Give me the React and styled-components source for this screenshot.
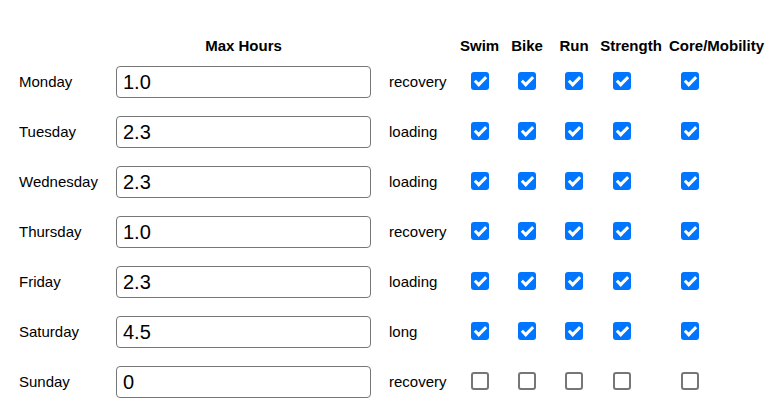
import styled, { createGlobalStyle } from "styled-components";

const GlobalStyle = createGlobalStyle`
  body {
    margin: 0;
    background: #ffffff;
    font-family: "Liberation Sans", Arial, sans-serif;
    color: #000000;
  }
`;

const days = [
  { day: "Monday", hours: "1.0", type: "recovery", on: true },
  { day: "Tuesday", hours: "2.3", type: "loading", on: true },
  { day: "Wednesday", hours: "2.3", type: "loading", on: true },
  { day: "Thursday", hours: "1.0", type: "recovery", on: true },
  { day: "Friday", hours: "2.3", type: "loading", on: true },
  { day: "Saturday", hours: "4.5", type: "long", on: true },
  { day: "Sunday", hours: "0", type: "recovery", on: false },
];

const sports = [
  { name: "Swim", offset: null },
  { name: "Bike", offset: null },
  { name: "Run", offset: null },
  { name: "Strength", offset: 20 },
  { name: "Core/Mobility", offset: 12 },
];

export default function App() {
  return (
    <Page>
      <GlobalStyle />
      <Planner>
        <HeaderRow>
          <span />
          <HeadCell>Max Hours</HeadCell>
          <span />
          {sports.map((s) => (
            <HeadCell key={s.name}>{s.name}</HeadCell>
          ))}
        </HeaderRow>
        {days.map((d) => (
          <DayRow key={d.day}>
            <DayName>{d.day}</DayName>
            <HoursInput type="text" defaultValue={d.hours} />
            <TypeLabel>{d.type}</TypeLabel>
            {sports.map((s) => (
              <CheckCell key={s.name} $offset={s.offset}>
                <Check type="checkbox" defaultChecked={d.on} />
              </CheckCell>
            ))}
          </DayRow>
        ))}
      </Planner>
    </Page>
  );
}

const Page = styled.div`
  padding: 36px 0 0 19px;
  width: 782px;
  height: 410px;
  box-sizing: border-box;
  overflow: hidden;
`;

const Planner = styled.div`
  display: flex;
  flex-direction: column;
`;

const columns = "97px 255px 89px 39px 56px 38px 76px 94px";

const HeaderRow = styled.div`
  display: grid;
  grid-template-columns: ${columns};
  height: 20px;
  align-items: center;
`;

const HeadCell = styled.div`
  font-weight: 700;
  font-size: 15px;
  text-align: center;
  white-space: nowrap;
  margin-top: -2px;
`;

const DayRow = styled.div`
  display: grid;
  grid-template-columns: ${columns};
  height: 50px;
  align-items: center;
`;

const DayName = styled.div`
  font-size: 15px;
  white-space: nowrap;
`;

const HoursInput = styled.input`
  box-sizing: border-box;
  width: 255px;
  height: 32px;
  margin-top: 2px;
  border: 1px solid #767676;
  border-radius: 4px;
  padding: 0 6px;
  font-family: "Liberation Sans", Arial, sans-serif;
  font-size: 20px;
  color: #000000;
  background: #ffffff;
  outline: none;
`;

const TypeLabel = styled.div`
  font-size: 15px;
  padding-left: 18px;
`;

const CheckCell = styled.div`
  display: flex;
  justify-content: ${(p) => (p.$offset == null ? "center" : "flex-start")};
  padding-left: ${(p) => (p.$offset == null ? 0 : p.$offset)}px;
`;

const Check = styled.input`
  appearance: none;
  position: relative;
  box-sizing: border-box;
  width: 18px;
  height: 18px;
  margin: 0;
  border: 2px solid #767676;
  border-radius: 3px;
  background: #ffffff;
  &:checked {
    border-color: #0075ff;
    background: #0075ff;
  }
  &:checked::after {
    content: "";
    position: absolute;
    left: 4px;
    top: 0px;
    width: 4px;
    height: 9px;
    border: solid #ffffff;
    border-width: 0 3px 3px 0;
    transform: rotate(45deg);
  }
`;
